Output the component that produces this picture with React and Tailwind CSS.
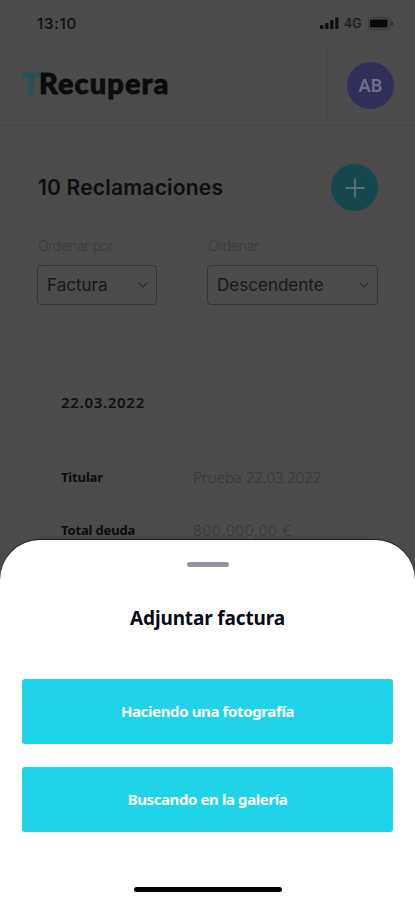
import { ChevronDown } from 'lucide-react'

const claim = [
  { label: 'Titular', value: 'Prueba 22.03.2022', spacing: 'tracking-[-0.02px]' },
  { label: 'Total deuda', value: '800.000,00 €', spacing: 'tracking-[0.9px]' },
]

function StatusBar() {
  return (
    <div className="flex h-[46px] items-center justify-between pl-[37px] pr-[21px] text-[#0d0e10]">
      <span className="pt-[2px] text-[15px] font-medium tracking-[0.8px]">13:10</span>
      <div className="flex items-center">
        <svg width="19" height="12" viewBox="0 0 19 12" fill="currentColor">
          <rect x="0" y="8" width="3.5" height="4" rx="1" />
          <rect x="5.2" y="6" width="3.2" height="6" rx="0.8" />
          <rect x="10.2" y="3" width="3.2" height="9" rx="0.8" />
          <rect x="15.3" y="0.5" width="3.2" height="11.5" rx="0.8" />
        </svg>
        <span className="ml-[5px] w-[18px] pt-[2px] text-[12.5px] font-medium leading-[18px] text-[#191919]">4G</span>
        <svg className="ml-[6px]" width="26" height="13" viewBox="0 0 26 13">
          <rect x="0.5" y="0.5" width="21.5" height="12" rx="3" fill="none" stroke="#363636" />
          <rect x="2" y="2.5" width="17.5" height="8" rx="1" fill="#080808" />
          <path d="M23.3 4v5c1.4-.6 2-1.500 2-2.500s-.6-2-2-2.500z" fill="#2d2d2d" />
        </svg>
      </div>
    </div>
  )
}

function Header() {
  return (
    <header className="flex h-[80px] justify-between border-b border-[#454545]">
      <div className="pl-[22px] pt-[17px] font-['Lato'] text-[29px] font-black leading-[40px] tracking-[1.1px] text-[#0b0b0c] [-webkit-text-stroke:0.9px_currentColor]">
        <span className="tracking-[-0.5px] text-[#26515a]">T</span>Recupera
      </div>
      <div className="flex w-[88px] border-l border-[#474747] pl-[19px] pt-[16px]">
        <div className="flex size-[47px] items-center justify-center rounded-full bg-[#2f2f5a] font-['Noto_Sans'] text-[18px] font-semibold text-[#6f708a]">
          AB
        </div>
      </div>
    </header>
  )
}

function SortSelect({ label, value, className }) {
  return (
    <div className={className}>
      <div className="pl-px text-[14px] font-light leading-[20px] tracking-[-0.3px] text-[#393939]">{label}</div>
      <div className="mt-[9px] flex h-[40px] items-center justify-between rounded-[4px] border border-[#303436] pl-[9px] pr-[5px]">
        <span className="pt-[2px] text-[17px] tracking-[0.02px] text-[#151719]">{value}</span>
        <ChevronDown size={16} strokeWidth={1.8} className="text-[#2b2e30]" />
      </div>
    </div>
  )
}

function ClaimCard() {
  return (
    <div className="mx-[37px] font-['Noto_Sans']">
      <div className="mt-[18px] h-[25px] w-px bg-[#474747]" />
      <div className="mt-[18px] h-[220px] border-x border-[#474747] pl-[23px] pt-[25px]">
        <div className="text-[15px] font-semibold leading-[22px] tracking-[0.7px] text-[#0d0f15]">22.03.2022</div>
        <div className="mt-[37px]">
          {claim.map((row) => (
            <div key={row.label} className="flex h-[53px] items-center leading-[20px]">
              <span className="w-[132px] text-[13px] font-bold tracking-[-0.15px] text-[#0b0c0e]">{row.label}</span>
              <span className={`text-[15px] font-light text-[#333535] ${row.spacing}`}>{row.value}</span>
            </div>
          ))}
        </div>
      </div>
    </div>
  )
}

function AttachSheet() {
  return (
    <div className="absolute inset-x-0 bottom-0 flex h-[360px] flex-col items-center rounded-t-[40px] bg-white px-[22px] font-['Noto_Sans'] shadow-[0_-1px_1px_#1c1c1c]">
      <div className="mt-[22px] h-[5px] w-[42px] rounded-full bg-[#9394a1]" />
      <h2 className="mt-[36px] text-[19px] font-bold leading-[30px] tracking-[-0.15px] text-[#080b18]">Adjuntar factura</h2>
      <button className="mt-[45.5px] h-[65.5px] w-full shrink-0 rounded-[3px] bg-[#1fd3e8] pb-px text-[15px] font-bold tracking-[-0.37px] text-white">
        Haciendo una fotografía
      </button>
      <button className="mt-[22.5px] h-[65.5px] w-full shrink-0 rounded-[3px] bg-[#1fd3e8] pb-px text-[15px] font-bold tracking-[-0.4px] text-white">
        Buscando en la galería
      </button>
      <div className="mt-[55px] h-[5px] w-[148px] shrink-0 rounded-full bg-black" />
    </div>
  )
}

export default function App() {
  return (
    <div className="relative h-[900px] w-[415px] overflow-hidden bg-[#4b4b4b] font-['Inter']">
      <StatusBar />
      <Header />
      <main className="pt-[38px]">
        <div className="flex h-[47px] items-center justify-between pl-[38px] pr-[37px]">
          <h1 className="pt-px text-[21px] font-semibold tracking-[0.2px] text-[#0d0e11]">10 Reclamaciones</h1>
          <button className="flex size-[47px] items-center justify-center rounded-full bg-[#14484d]">
            <svg width="20" height="20" viewBox="0 0 20 20" stroke="#566f73" strokeWidth="2">
              <path d="M10 0.500v19M0.500 10h19" />
            </svg>
          </button>
        </div>
        <div className="flex justify-between pl-[37px] pr-[37px] pt-[25px]">
          <SortSelect label="Ordenar por" value="Factura" className="w-[120px]" />
          <SortSelect label="Ordenar" value="Descendente" className="w-[171px]" />
        </div>
        <ClaimCard />
      </main>
      <AttachSheet />
    </div>
  )
}
